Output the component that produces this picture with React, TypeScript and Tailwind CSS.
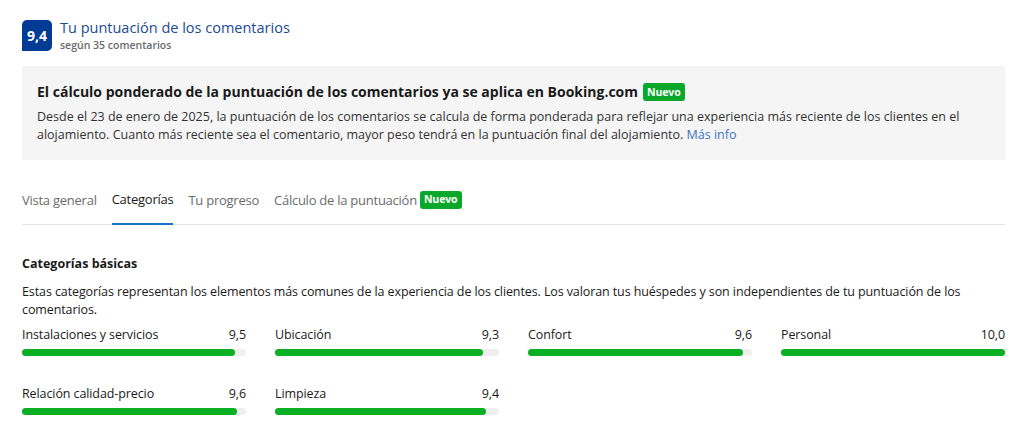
import React from "react";

const categories = [
  { label: "Instalaciones y servicios", score: 9.5 },
  { label: "Ubicación", score: 9.3 },
  { label: "Confort", score: 9.6 },
  { label: "Personal", score: 10 },
  { label: "Relación calidad-precio", score: 9.6 },
  { label: "Limpieza", score: 9.4 },
];

const tabs = ["Vista general", "Categorías", "Tu progreso", "Cálculo de la puntuación"];

function NewBadge() {
  return (
    <span className="inline-flex h-[18px] items-center rounded-[3px] bg-[#0aa82a] px-[4px] text-[10.5px] font-bold leading-none tracking-[-0.1px] text-white">
      Nuevo
    </span>
  );
}

function ScoreBar({ label, score }: { label: string; score: number }) {
  return (
    <div className="flex flex-col">
      <div className="flex items-center justify-between text-[12.5px] leading-[18px] tracking-[-0.1px] text-[#1a1a1a]">
        <span>{label}</span>
        <span>{score.toFixed(1).replace(".", ",")}</span>
      </div>
      <div className="mt-[5px] h-[7px] w-full rounded-full bg-[#efefef]">
        <div className="h-full rounded-full bg-[#0aaf24]" style={{ width: `${score * 10}%` }} />
      </div>
    </div>
  );
}

export default function App() {
  return (
    <div className="min-h-[433px] bg-white px-[22px] pt-[20px] text-[#1a1a1a] [font-family:'Open_Sans',sans-serif]">
      <div className="flex items-start gap-[8px]">
        <div className="flex h-[31px] w-[30px] items-center justify-center rounded-t-[5px] rounded-br-[5px] bg-[#003b95] text-[14px] font-bold text-white">
          9,4
        </div>
        <div className="-mt-[2px] flex flex-col">
          <span className="text-[14.5px] leading-[20px] text-[#1a4a94]">Tu puntuación de los comentarios</span>
          <span className="text-[10.5px] font-semibold leading-[14px] text-[#6b6b6b]">según 35 comentarios</span>
        </div>
      </div>

      <div className="mt-[14px] w-[983px] bg-[#f5f5f5] px-[15px] pb-[16px] pt-[16px]">
        <div className="flex items-center gap-[5px]">
          <h2 className="text-[14px] font-bold leading-[20px]">
            El cálculo ponderado de la puntuación de los comentarios ya se aplica en Booking.com
          </h2>
          <NewBadge />
        </div>
        <p className="mt-[6px] text-[12.5px] leading-[18px] text-[#333]">
          Desde el 23 de enero de 2025, la puntuación de los comentarios se calcula de forma ponderada para reflejar una
          experiencia más reciente de los clientes en el alojamiento. Cuanto más reciente sea el comentario, mayor peso
          tendrá en la puntuación final del alojamiento. <span className="text-[#3d74c4]">Más info</span>
        </p>
      </div>

      <div className="mt-[24px] flex w-[983px] gap-[15px] border-b border-[#e4e4e4] text-[13px] tracking-[-0.25px]">
        {tabs.map((t, i) => (
          <div
            key={t}
            className={`flex items-center gap-[3px] pb-[15px] pt-[6px] ${
              i === 1 ? "-mb-px border-b-2 border-[#1b6fd1] text-[#1a1a1a]" : "text-[#6b6b6b]"
            }`}
          >
            <span className="leading-[18px]">{t}</span>
            {i === 3 && <NewBadge />}
          </div>
        ))}
      </div>

      <h3 className="mt-[30px] text-[12.5px] font-bold leading-[18px]">Categorías básicas</h3>
      <p className="mt-[10px] w-[983px] text-[12.5px] leading-[18px] tracking-[-0.1px] text-[#1a1a1a]">
        Estas categorías representan los elementos más comunes de la experiencia de los clientes. Los valoran tus
        huéspedes y son independientes de tu puntuación de los comentarios.
      </p>

      <div className="mt-[7px] grid w-[983px] grid-cols-4 gap-x-[29px] gap-y-[29px]">
        {categories.map((c) => (
          <ScoreBar key={c.label} label={c.label} score={c.score} />
        ))}
      </div>
    </div>
  );
}
